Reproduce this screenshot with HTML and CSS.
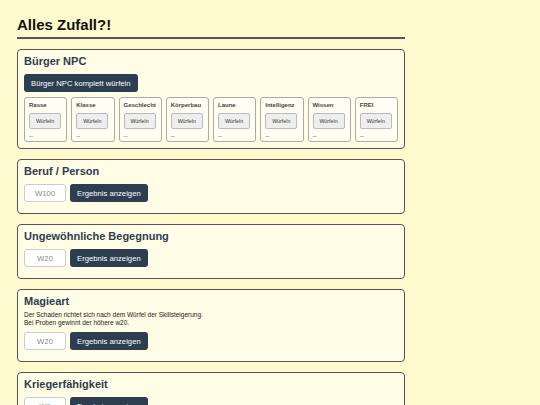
FILE: index.html
```html
<!DOCTYPE html>
<html lang="de">
<head>
    <meta charset="UTF-8">
    <meta name="viewport" content="width=device-width, initial-scale=1.0">
    <title>Alles Zufall?!</title>
    <link rel="stylesheet" href="styles.css">
</head>
<body>
    <div class="page">
        <h1>Alles Zufall?!</h1>

        <!-- NPC generator -->
        <section class="card">
            <h2>Bürger NPC</h2>
            <button class="btn-dark btn-wide" id="rollAll">Bürger NPC komplett würfeln</button>
            <div class="npc-grid">
                <div class="npc-cell"><span class="npc-label">Rasse</span><button class="btn-light">Würfeln</button><div class="npc-result">--</div></div>
                <div class="npc-cell"><span class="npc-label">Klasse</span><button class="btn-light">Würfeln</button><div class="npc-result">--</div></div>
                <div class="npc-cell"><span class="npc-label">Geschlecht</span><button class="btn-light">Würfeln</button><div class="npc-result">--</div></div>
                <div class="npc-cell"><span class="npc-label">Körperbau</span><button class="btn-light">Würfeln</button><div class="npc-result">--</div></div>
                <div class="npc-cell"><span class="npc-label">Laune</span><button class="btn-light">Würfeln</button><div class="npc-result">--</div></div>
                <div class="npc-cell"><span class="npc-label">Intelligenz</span><button class="btn-light">Würfeln</button><div class="npc-result">--</div></div>
                <div class="npc-cell"><span class="npc-label">Wissen</span><button class="btn-light">Würfeln</button><div class="npc-result">--</div></div>
                <div class="npc-cell"><span class="npc-label">FREI</span><button class="btn-light">Würfeln</button><div class="npc-result">--</div></div>
            </div>
        </section>

        <section class="card">
            <h2>Beruf / Person</h2>
            <div class="roll-row">
                <input type="text" placeholder="W100">
                <button class="btn-dark">Ergebnis anzeigen</button>
            </div>
            <div class="roll-result"></div>
        </section>

        <section class="card">
            <h2>Ungewöhnliche Begegnung</h2>
            <div class="roll-row">
                <input type="text" placeholder="W20">
                <button class="btn-dark">Ergebnis anzeigen</button>
            </div>
            <div class="roll-result"></div>
        </section>

        <section class="card">
            <h2>Magieart</h2>
            <p class="note">Der Schaden richtet sich nach dem Würfel der Skillsteigerung.<br>Bei Proben gewinnt der höhere w20.</p>
            <div class="roll-row">
                <input type="text" placeholder="W20">
                <button class="btn-dark">Ergebnis anzeigen</button>
            </div>
            <div class="roll-result"></div>
        </section>

        <section class="card">
            <h2>Kriegerfähigkeit</h2>
            <div class="roll-row">
                <input type="text" placeholder="W6">
                <button class="btn-dark">Ergebnis anzeigen</button>
            </div>
            <div class="roll-result"></div>
        </section>
    </div>
</body>
</html>
```

FILE: styles.css
```css
body {
    font-family: "Liberation Sans", Arial, sans-serif;
    background-color: #fffacd; /* lemon chiffon */
    margin: 0;
    color: #222;
}

.page {
    width: 388px;
    padding: 16px 0 0 17px;
}

h1 {
    font-size: 15px;
    margin: 0;
    padding-bottom: 4px;
    border-bottom: 2px solid #555;
    color: #111;
}

.card {
    background-color: #fffde6;
    border: 1px solid #555;
    border-radius: 4px;
    padding: 5px 6px 6px;
    margin-top: 10px;
    font-size: 8px;
}

.card h2 {
    font-size: 11px;
    line-height: 13px;
    margin: 0 0 6px;
    color: #2c3e50;
}

.note {
    font-size: 6.5px;
    line-height: 8px;
    margin: -3px 0 5px;
}

.btn-dark {
    display: block;
    background-color: #2c3e50;
    color: #fff;
    border: none;
    border-radius: 3px;
    font-family: inherit;
    font-size: 7.7px;
    height: 18px;
    padding: 0 7px;
}

.btn-wide {
    margin-bottom: 5px;
}

.npc-grid {
    display: grid;
    grid-template-columns: repeat(8, 1fr);
    gap: 4px;
}

.npc-cell {
    border: 1px solid #aaa;
    border-radius: 3px;
    background-color: #fffef2;
    padding: 4px 4px 0;
    height: 45px;
    box-sizing: border-box;
}

.npc-label {
    display: block;
    font-size: 6px;
    line-height: 7px;
    font-weight: bold;
    color: #444;
    margin-bottom: 4px;
}

.btn-light {
    display: block;
    background-color: #eee;
    border: 1px solid #bbb;
    border-radius: 2px;
    font-family: inherit;
    font-size: 5.3px;
    height: 16px;
    width: 32px;
    padding: 0;
    color: #333;
}

.npc-result {
    font-size: 6px;
    line-height: 7px;
    color: #444;
    margin-top: 4px;
}

.roll-row {
    display: flex;
    gap: 4px;
}

.roll-row input {
    width: 42px;
    height: 18px;
    box-sizing: border-box;
    border: 1px solid #ccc;
    border-radius: 3px;
    font-family: inherit;
    font-size: 7.7px;
    text-align: center;
    padding: 0;
    background: #fff;
}

.roll-row input::placeholder {
    color: #888;
}

.roll-result {
    margin-top: 5px;
}
```
